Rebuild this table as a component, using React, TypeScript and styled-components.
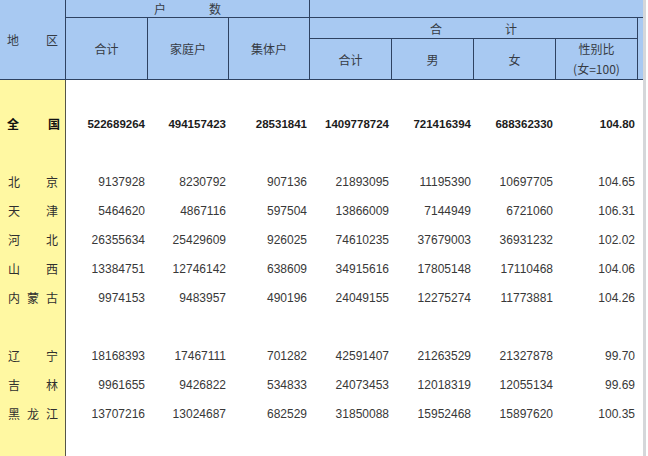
import React from "react";
import styled, { createGlobalStyle } from "styled-components";

const GlobalStyle = createGlobalStyle`
  html, body {
    margin: 0;
    padding: 0;
    background: #ffffff;
  }
  body {
    font-family: "Liberation Sans", Arial, "Noto Sans CJK SC", sans-serif;
  }
`;

type Row = {
  region: string;
  values?: string[];
  bold?: boolean;
};

const rows: Row[] = [
  { region: "" },
  {
    region: "全国",
    bold: true,
    values: ["522689264", "494157423", "28531841", "1409778724", "721416394", "688362330", "104.80"],
  },
  { region: "" },
  { region: "北京", values: ["9137928", "8230792", "907136", "21893095", "11195390", "10697705", "104.65"] },
  { region: "天津", values: ["5464620", "4867116", "597504", "13866009", "7144949", "6721060", "106.31"] },
  { region: "河北", values: ["26355634", "25429609", "926025", "74610235", "37679003", "36931232", "102.02"] },
  { region: "山西", values: ["13384751", "12746142", "638609", "34915616", "17805148", "17110468", "104.06"] },
  { region: "内蒙古", values: ["9974153", "9483957", "490196", "24049155", "12275274", "11773881", "104.26"] },
  { region: "" },
  { region: "辽宁", values: ["18168393", "17467111", "701282", "42591407", "21263529", "21327878", "99.70"] },
  { region: "吉林", values: ["9961655", "9426822", "534833", "24073453", "12018319", "12055134", "99.69"] },
  { region: "黑龙江", values: ["13707216", "13024687", "682529", "31850088", "15952468", "15897620", "100.35"] },
  { region: "" },
];

function App() {
  return (
    <Page>
      <GlobalStyle />
      <Sheet>
        <Header>
          <HeadCell $col="1" $row="1 / 4">
            <Justified $pad="0 7px">
              <span>地</span>
              <span>区</span>
            </Justified>
          </HeadCell>
          <HeadCell $col="2 / 5" $row="1">
            <Spaced $gap={43}>
              <span>户</span>
              <span>数</span>
            </Spaced>
          </HeadCell>
          <HeadCell $col="5 / 10" $row="1" />
          <HeadCell $col="2" $row="2 / 4">合计</HeadCell>
          <HeadCell $col="3" $row="2 / 4">家庭户</HeadCell>
          <HeadCell $col="4" $row="2 / 4">集体户</HeadCell>
          <HeadCell $col="5 / 9" $row="2">
            <Spaced $gap={63}>
              <span>合</span>
              <span>计</span>
            </Spaced>
          </HeadCell>
          <HeadCell $col="9" $row="2 / 4" />
          <HeadCell $col="5" $row="3">合计</HeadCell>
          <HeadCell $col="6" $row="3">男</HeadCell>
          <HeadCell $col="7" $row="3">女</HeadCell>
          <HeadCell $col="8" $row="3">
            <Stack>
              <span>性别比</span>
              <span>(女=100)</span>
            </Stack>
          </HeadCell>
        </Header>
        <Body>
          {rows.map((row, i) => (
            <DataRow key={i}>
              <RegionCell $bold={row.bold}>
                {row.region && (
                  <Justified $pad={row.bold ? "0 5px 0 7px" : "0 7px 0 8px"}>
                    {row.region.split("").map((ch, j) => (
                      <span key={j}>{ch}</span>
                    ))}
                  </Justified>
                )}
              </RegionCell>
              {row.values
                ? row.values.map((v, j) => (
                    <NumCell key={j} $bold={row.bold}>
                      {v}
                    </NumCell>
                  ))
                : null}
            </DataRow>
          ))}
        </Body>
      </Sheet>
      <Edge />
    </Page>
  );
}

const Page = styled.div`
  display: flex;
  width: 648px;
  height: 456px;
  overflow: hidden;
  background: #ffffff;
`;

const Sheet = styled.div`
  width: 643px;
  display: flex;
  flex-direction: column;
`;

const Edge = styled.div`
  width: 3px;
  height: 100%;
  background: #d5d7da;
`;

const Header = styled.div`
  display: grid;
  grid-template-columns: 65px 81px 80px 80px 81px 81px 81px 81px 5px;
  grid-template-rows: 17px 20px 40px;
  gap: 1px;
  background: #2e4262;
  border-bottom: 1px solid #2e4262;
`;

const HeadCell = styled.div<{ $col: string; $row: string }>`
  grid-column: ${(p) => p.$col};
  grid-row: ${(p) => p.$row};
  background: #a8c9f2;
  display: flex;
  align-items: center;
  justify-content: center;
  font-size: 12px;
  color: #363b44;
  font-family: "Noto Sans CJK SC", "Liberation Sans", sans-serif;
`;

const Justified = styled.div<{ $pad: string }>`
  width: 100%;
  box-sizing: border-box;
  padding: ${(p) => p.$pad};
  display: flex;
  justify-content: space-between;
  align-items: center;
`;

const Spaced = styled.div<{ $gap: number }>`
  display: flex;
  gap: ${(p) => p.$gap}px;
`;

const Stack = styled.div`
  display: flex;
  flex-direction: column;
  align-items: center;
  line-height: 20px;
`;

const Body = styled.div`
  flex: 1;
  display: flex;
  flex-direction: column;
`;

const DataRow = styled.div`
  display: grid;
  grid-template-columns: 66px 82px 81px 81px 82px 82px 82px 82px 5px;
  height: 29px;
  flex-shrink: 0;
`;

const RegionCell = styled.div<{ $bold?: boolean }>`
  box-sizing: border-box;
  background: #fff8a2;
  border-right: 1px solid #55554a;
  display: flex;
  align-items: center;
  font-family: "Noto Sans CJK SC", "Liberation Sans", sans-serif;
  font-size: 12px;
  font-weight: ${(p) => (p.$bold ? 700 : 400)};
  color: ${(p) => (p.$bold ? "#111111" : "#2f2f2f")};
`;

const NumCell = styled.div<{ $bold?: boolean }>`
  display: flex;
  align-items: center;
  justify-content: flex-end;
  padding-right: 3px;
  font-family: "Liberation Sans", Arial, sans-serif;
  font-size: ${(p) => (p.$bold ? "11.5px" : "12px")};
  font-weight: ${(p) => (p.$bold ? 700 : 400)};
  color: ${(p) => (p.$bold ? "#1c1c1c" : "#383838")};
`;

export default App;
